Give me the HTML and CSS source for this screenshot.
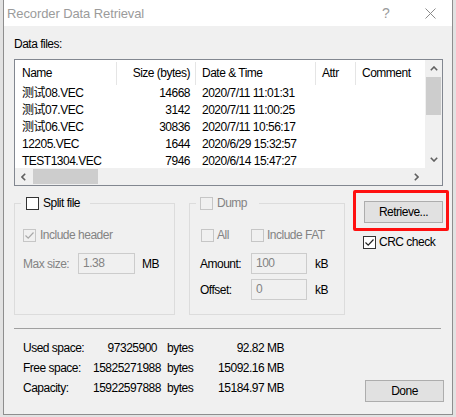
FILE: index.html
```html
<!DOCTYPE html>
<html>
<head>
<meta charset="utf-8">
<link rel="stylesheet" href="styles.css">
</head>
<body>
<div class="window">
  <div class="titlebar">
    <span class="title">Recorder Data Retrieval</span>
    <span class="tb-help">?</span>
    <span class="tb-close"><svg width="11" height="11" viewBox="0 0 11 11"><path d="M0.5 0.5 L10.5 10.5 M10.5 0.5 L0.5 10.5" stroke="#8a8a8a" stroke-width="1" fill="none"/></svg></span>
  </div>
  <div class="client">
    <div class="label-files">Data files:</div>
    <div class="listbox">
      <div class="lb-top">
        <div class="lv">
          <div class="lv-head">
            <div class="c c-name">Name</div>
            <div class="c c-size">Size (bytes)</div>
            <div class="c c-date">Date &amp; Time</div>
            <div class="c c-attr">Attr</div>
            <div class="c c-com">Comment</div>
          </div>
          <div class="lv-rows">
            <div class="row"><div class="c c-name">测试08.VEC</div><div class="c c-size">14668</div><div class="c c-date">2020/7/11 11:01:31</div><div class="c c-attr"></div><div class="c c-com"></div></div>
            <div class="row"><div class="c c-name">测试07.VEC</div><div class="c c-size">3142</div><div class="c c-date">2020/7/11 11:00:25</div><div class="c c-attr"></div><div class="c c-com"></div></div>
            <div class="row"><div class="c c-name">测试06.VEC</div><div class="c c-size">30836</div><div class="c c-date">2020/7/11 10:56:17</div><div class="c c-attr"></div><div class="c c-com"></div></div>
            <div class="row"><div class="c c-name">12205.VEC</div><div class="c c-size">1644</div><div class="c c-date">2020/6/29 15:32:57</div><div class="c c-attr"></div><div class="c c-com"></div></div>
            <div class="row"><div class="c c-name">TEST1304.VEC</div><div class="c c-size">7946</div><div class="c c-date">2020/6/14 15:47:27</div><div class="c c-attr"></div><div class="c c-com"></div></div>
          </div>
        </div>
        <div class="vscroll">
          <div class="sb-btn"><svg width="8" height="5" viewBox="0 0 8 5"><path d="M0.8 4.2 L4 1 L7.2 4.2" stroke="#606060" stroke-width="1.6" fill="none"/></svg></div>
          <div class="vthumb"></div>
          <div class="sb-fill"></div>
          <div class="sb-btn"><svg width="8" height="5" viewBox="0 0 8 5"><path d="M0.8 0.8 L4 4 L7.2 0.8" stroke="#606060" stroke-width="1.6" fill="none"/></svg></div>
        </div>
      </div>
      <div class="lb-bottom">
        <div class="hscroll">
          <div class="sb-btn"><svg width="5" height="8" viewBox="0 0 5 8"><path d="M4.2 0.8 L1 4 L4.2 7.2" stroke="#606060" stroke-width="1.6" fill="none"/></svg></div>
          <div class="hthumb"></div>
          <div class="sb-fill"></div>
          <div class="sb-btn"><svg width="5" height="8" viewBox="0 0 5 8"><path d="M0.8 0.8 L4 4 L0.8 7.2" stroke="#606060" stroke-width="1.6" fill="none"/></svg></div>
        </div>
        <div class="corner"></div>
      </div>
    </div>

    <div class="middle">
      <fieldset class="group g-split">
        <legend class="legend"><span class="cb"></span><span class="cb-text">Split file</span></legend>
        <div class="g-body">
          <div class="chk-row r-first"><span class="cb cb-dis"><svg width="11" height="11" viewBox="0 0 11 11"><path d="M1.5 5.5 L4.2 8.2 L9.5 2.5" stroke="#a8a8a8" stroke-width="1.2" fill="none"/></svg></span><span class="cb-text dis">Include header</span></div>
          <div class="field-row r-max"><span class="f-label dis l-max">Max size:</span><span class="inp i-max">1.38</span><span class="unit u-mb">MB</span></div>
        </div>
      </fieldset>
      <fieldset class="group g-dump">
        <legend class="legend"><span class="cb cb-dis"></span><span class="cb-text dis">Dump</span></legend>
        <div class="g-body">
          <div class="chk-row r-first">
            <span class="chk-item w-all"><span class="cb cb-dis"></span><span class="cb-text dis">All</span></span>
            <span class="chk-item"><span class="cb cb-dis"></span><span class="cb-text dis">Include FAT</span></span>
          </div>
          <div class="field-row r-amount"><span class="f-label l-amt">Amount:</span><span class="inp i-amt">100</span><span class="unit u-kb">kB</span></div>
          <div class="field-row r-offset"><span class="f-label l-amt">Offset:</span><span class="inp i-amt">0</span><span class="unit u-kb">kB</span></div>
        </div>
      </fieldset>
      <div class="rightcol">
        <div class="btn-wrap">
          <div class="btn">Retrieve...</div>
          <div class="highlight"></div>
        </div>
        <div class="chk-row r-crc"><span class="cb"><svg width="11" height="11" viewBox="0 0 11 11"><path d="M1.5 5.5 L4.2 8.2 L9.5 2.5" stroke="#222" stroke-width="1.2" fill="none"/></svg></span><span class="cb-text">CRC check</span></div>
      </div>
    </div>

    <div class="sep"></div>

    <div class="bottom">
      <div class="stats">
        <span class="s-lab">Used space:</span><span class="s-num">97325900</span><span class="s-unit">bytes</span><span class="s-mb">92.82 MB</span>
        <span class="s-lab">Free space:</span><span class="s-num">15825271988</span><span class="s-unit">bytes</span><span class="s-mb">15092.16 MB</span>
        <span class="s-lab">Capacity:</span><span class="s-num">15922597888</span><span class="s-unit">bytes</span><span class="s-mb">15184.97 MB</span>
      </div>
      <div class="btn btn-done">Done</div>
    </div>
  </div>
</div>
</body>
</html>
```

FILE: styles.css
```css
* { box-sizing: border-box; }
html, body { margin: 0; padding: 0; }
body {
  width: 456px;
  height: 417px;
  overflow: hidden;
  background: #e2e2e2;
  font-family: "Liberation Sans", "Noto Sans CJK SC", sans-serif;
  font-size: 12px;
  letter-spacing: -0.5px;
  color: #000;
}
.window {
  margin-left: 3px;
  width: 450px;
  height: 415px;
  border: 1px solid #8e8e8e;
  border-top: none;
  background: #f0f0f0;
  display: flex;
  flex-direction: column;
}
.titlebar {
  flex: none;
  height: 26px;
  background: #fff;
  display: flex;
  align-items: center;
}
.title {
  padding-left: 3px;
  font-size: 13px;
  letter-spacing: -0.1px;
  color: #9b9b9b;
}
.tb-help {
  margin-left: auto;
  width: 46px;
  text-align: center;
  color: #9b9b9b;
  font-size: 14px;
  letter-spacing: 0;
}
.tb-close {
  width: 43px;
  display: flex;
  justify-content: center;
}
.client {
  flex: 1;
  padding: 0 8px 0 10px;
}
.label-files {
  margin-top: 11px;
  line-height: 14px;
}
.listbox {
  margin-top: 8px;
  width: 429px;
  height: 127px;
  border: 1px solid #828790;
  background: #fff;
}
.lb-top { display: flex; height: 108px; }
.lv { width: 410px; overflow: hidden; }
.lv-head { display: flex; height: 25px; padding-top: 2px; }
.lv-head .c { height: 23px; line-height: 23px; border-right: 1px solid #e5e5e5; }
.lv-head .c-com { border-right: none; }
.lv-rows { height: 83px; overflow: hidden; }
.row { display: flex; height: 17px; line-height: 17px; }
.row .c { border-right: 1px solid transparent; }
.c { white-space: nowrap; overflow: hidden; flex: none; }
.c-name { width: 102px; padding-left: 7px; }
.c-size { width: 79px; text-align: right; padding-right: 5px; }
.c-date { width: 120px; padding-left: 6px; }
.c-attr { width: 40px; padding-left: 6px; }
.c-com { width: 69px; padding-left: 6px; }

.vscroll {
  width: 17px;
  background: #f0f0f0;
  display: flex;
  flex-direction: column;
}
.sb-btn {
  flex: none;
  width: 17px;
  height: 17px;
  display: flex;
  align-items: center;
  justify-content: center;
}
.sb-fill { flex: 1; }
.vthumb { height: 38px; margin: 0 1px; background: #cdcdcd; }
.lb-bottom { display: flex; height: 17px; }
.hscroll {
  width: 410px;
  background: #f0f0f0;
  display: flex;
}
.hthumb { width: 65px; margin: 1px 0 1px 1px; background: #cdcdcd; }
.corner { width: 17px; background: #f0f0f0; }

.middle {
  display: flex;
  align-items: flex-start;
  margin-top: 10px;
}
.group {
  margin: 0;
  padding: 0;
  border: 1px solid #dcdcdc;
  height: 119px;
  min-width: 0;
}
.g-split { width: 161px; margin-right: 14px; }
.g-dump { width: 156px; }
.legend {
  margin-left: 6px;
  padding: 0 10px 0 5px;
  height: 14px;
  line-height: 14px;
  display: flex;
  align-items: center;
}
.g-dump .legend { padding-left: 4px; padding-right: 12px; }
.cb {
  flex: none;
  width: 13px;
  height: 13px;
  border: 1px solid #333;
  background: #fff;
  display: inline-flex;
  align-items: center;
  justify-content: center;
}
.cb-dis { border-color: #c6c6c6; background: #f0f0f0; }
.cb-text { margin-left: 4px; white-space: nowrap; }
.dis { color: #838383; }
.g-split .g-body { padding-left: 8px; }
.g-dump .g-body { padding-left: 11px; }
.chk-row { display: flex; align-items: center; height: 14px; line-height: 14px; }
.r-first { margin-top: 18px; }
.chk-item { display: flex; align-items: center; }
.chk-item .cb-text { margin-left: 3px; }
.w-all { width: 50px; }
.field-row { display: flex; align-items: center; height: 21px; }
.r-max { margin-top: 11px; }
.r-amount { margin-top: 11px; }
.r-offset { margin-top: 5px; }
.f-label { white-space: nowrap; }
.l-max { width: 55px; }
.l-amt { width: 51px; margin-left: -1px; }
.inp {
  height: 21px;
  line-height: 19px;
  border: 1px solid #cccccc;
  background: #f0f0f0;
  color: #838383;
  padding-left: 4px;
}
.i-max { width: 57px; }
.i-amt { width: 56px; }
.unit { white-space: nowrap; }
.u-mb { margin-left: 7px; }
.u-kb { margin-left: 8px; }

.rightcol { margin-left: 19px; width: 79px; }
.btn-wrap { position: relative; margin-top: 5px; }
.btn {
  width: 79px;
  height: 22px;
  line-height: 20px;
  text-align: center;
  border: 1px solid #adadad;
  background: #e1e1e1;
}
.highlight {
  position: absolute;
  left: -11px;
  top: -11px;
  width: 96px;
  height: 41px;
  border: 3px solid #ff1010;
  border-radius: 2px;
}
.r-crc { margin-top: 12px; margin-left: -1px; }
.r-crc .cb-text { margin-left: 3px; }

.sep {
  margin-top: 13px;
  width: 427px;
  height: 1px;
  background: #a0a0a0;
}
.bottom { display: flex; align-items: flex-start; }
.stats {
  margin-top: 9px;
  margin-left: 9px;
  display: grid;
  grid-template-columns: 70px 64px 60px 67px;
  grid-auto-rows: 20px;
  line-height: 20px;
}
.s-lab, .s-unit { white-space: nowrap; }
.s-num, .s-mb { text-align: right; white-space: nowrap; }
.s-unit { padding-left: 10px; }
.btn-done { margin-left: auto; margin-top: 51px; }
```
